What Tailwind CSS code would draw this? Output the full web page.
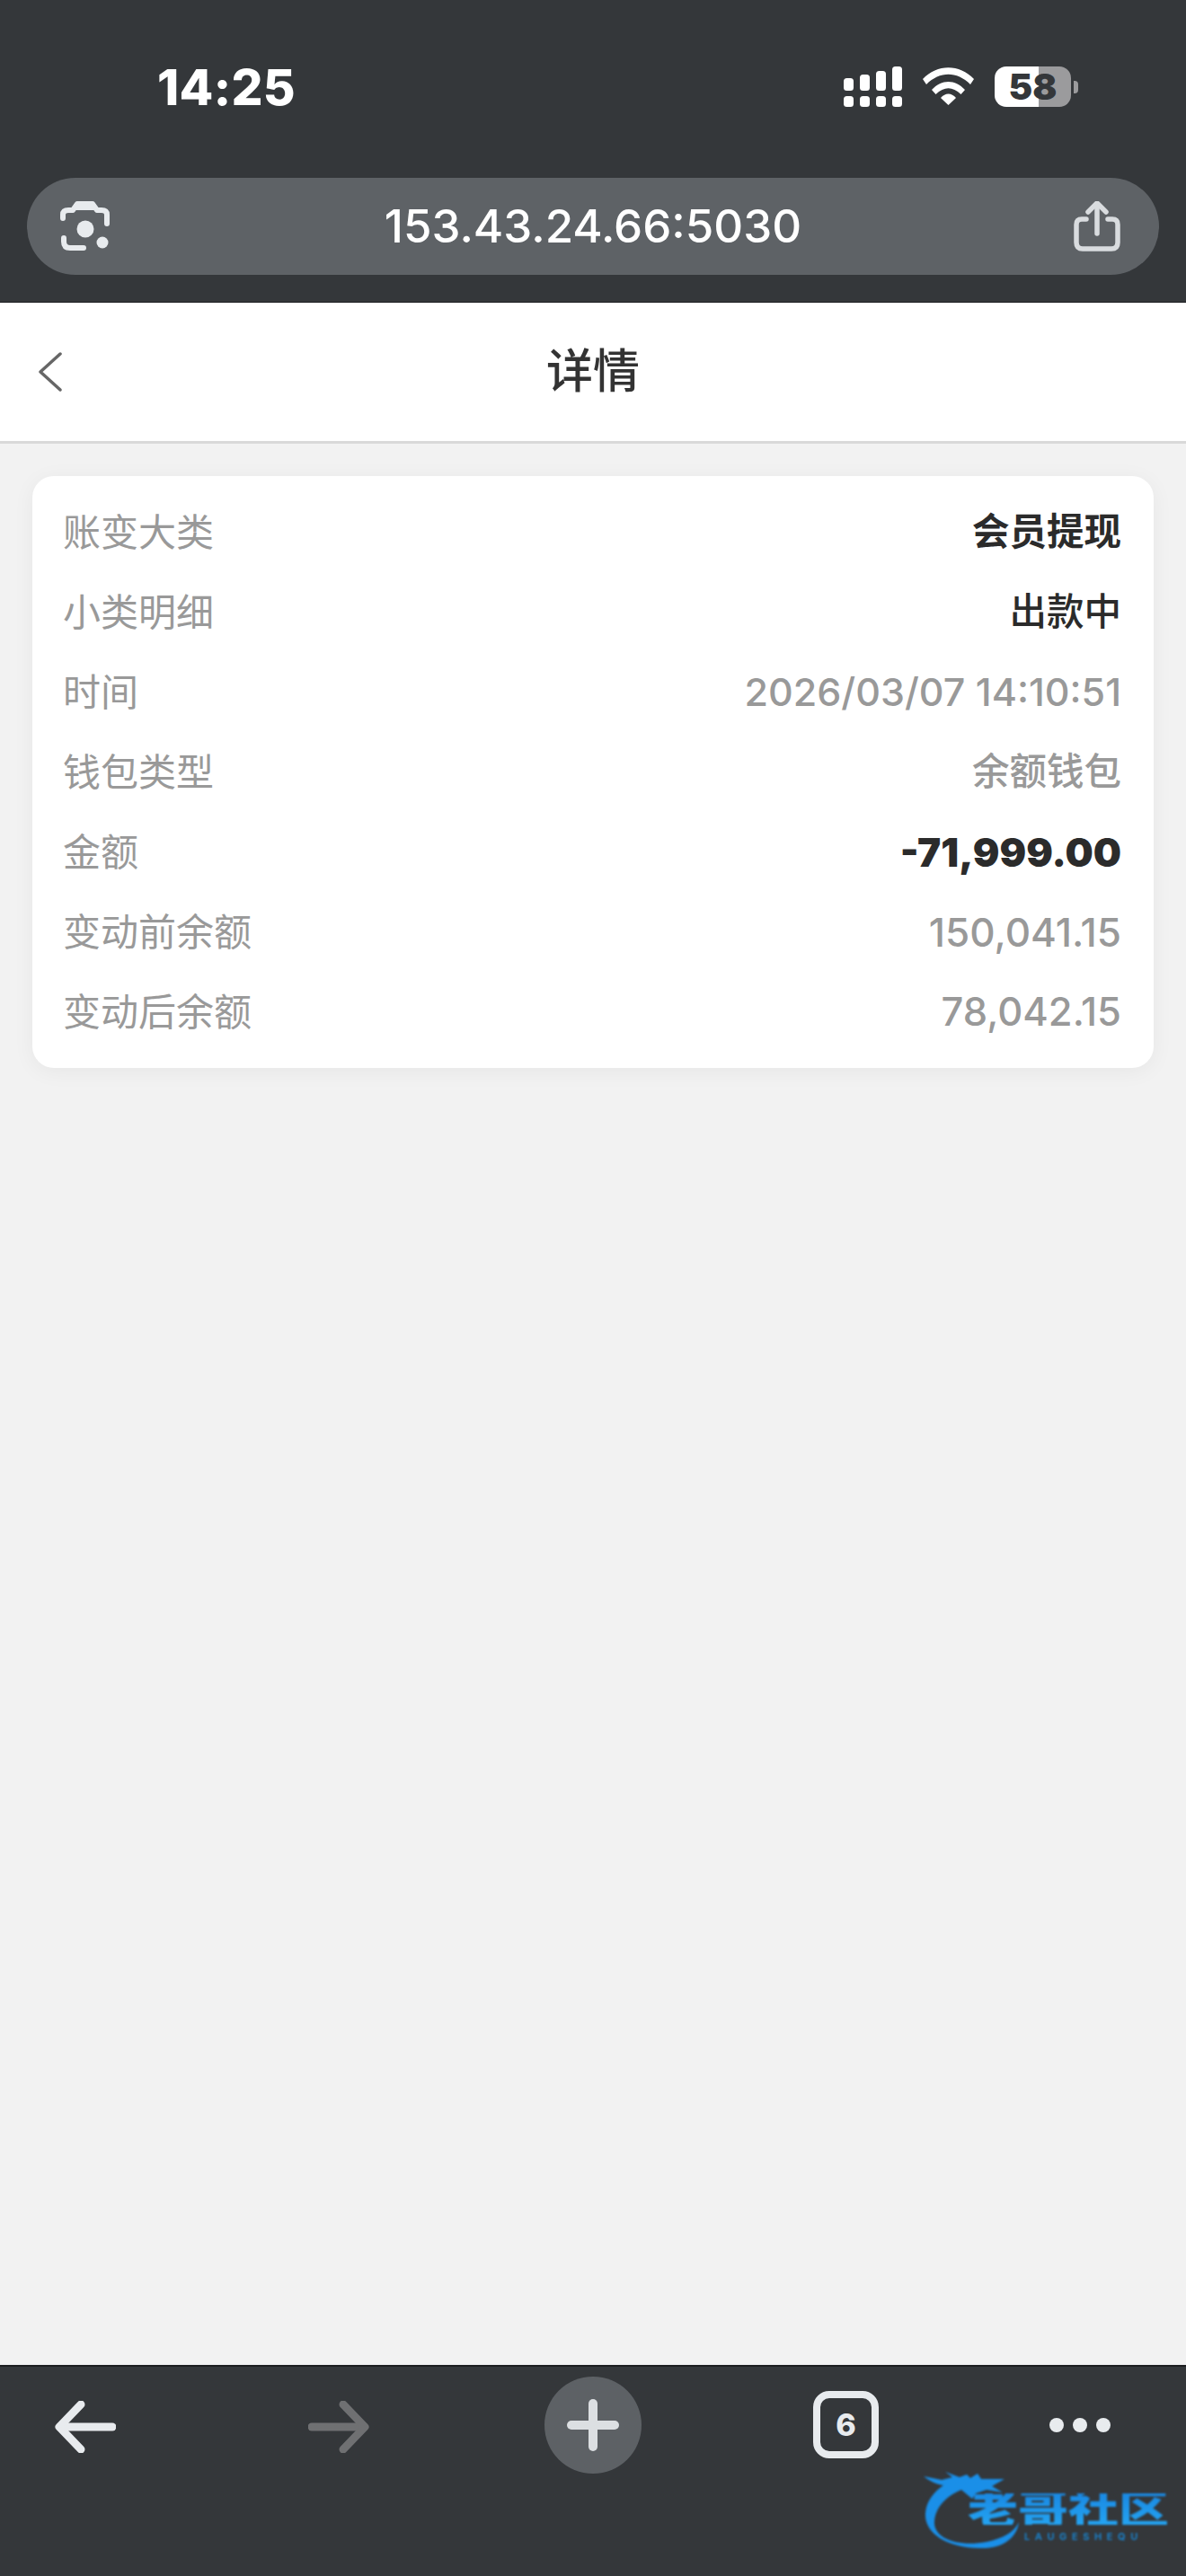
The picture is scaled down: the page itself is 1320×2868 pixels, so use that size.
<!DOCTYPE html>
<html lang="zh-CN">
<head>
<meta charset="utf-8">
<title>详情</title>
<script src="https://cdn.jsdelivr.net/npm/@tailwindcss/browser@4"></script>
</head>
<body class="m-0">
<div class="relative flex flex-col w-[1320px] h-[2868px] overflow-hidden bg-[#f2f2f2] font-['Inter','Noto_Sans_CJK_SC',sans-serif]">

  <header class="h-[337px] shrink-0 bg-[#34373a] border-b border-b-[#1c1e20] flex flex-col">
    <div class="h-[198px] shrink-0 flex items-start justify-between pl-[175px] pr-[120px] pt-[64px]">
      <span class="text-[55px] leading-[66px] font-extrabold text-white tracking-[0.3px]">14:25</span>
      <div class="flex items-start gap-[23px] pt-[10px]">
        <svg width="65" height="45" viewBox="0 0 65 45" fill="#fff">
          <rect x="0" y="13" width="11" height="14" rx="3.5"/><rect x="18" y="9" width="11" height="18" rx="3.5"/><rect x="36" y="5" width="11" height="22" rx="3.5"/><rect x="54" y="0" width="11" height="27" rx="3.5"/>
          <rect x="0" y="33" width="11" height="12" rx="3.5"/><rect x="18" y="33" width="11" height="12" rx="3.5"/><rect x="36" y="33" width="11" height="12" rx="3.5"/><rect x="54" y="33" width="11" height="12" rx="3.5"/>
        </svg>
        <svg width="57" height="42" viewBox="0 0 57 42" fill="#fff" class="mt-[1px]">
          <path d="M0 13 C16 -4 41 -4 57 13 L53 19 C38 4 19 4 4 19 Z"/>
          <path d="M10 25 C21 13 36 13 47 25 L42.500 30 C33 21 24 21 14.500 30 Z"/>
          <path d="M20 34 C25 28 32 28 37 34 L28.500 42 Z"/>
        </svg>
        <div class="flex items-center gap-[3px]">
          <div class="w-[85px] h-[45px] rounded-[13px] bg-[linear-gradient(90deg,#ffffff_49px,#9b9b9d_49px)] flex items-center justify-center">
            <span class="text-[40px] leading-[45px] font-black text-[#34373a]">58</span>
          </div>
          <div class="w-[5px] h-[14px] rounded-r-[4px] bg-[#9b9b9d]"></div>
        </div>
      </div>
    </div>
    <div class="mx-[30px] h-[108px] rounded-full bg-[#5e6266] flex items-center justify-between pl-[37px] pr-[43px]">
      <svg width="58" height="56" viewBox="0 0 58 56" fill="none" stroke="#e8ebee" stroke-width="6" stroke-linecap="round" stroke-linejoin="round">
        <path d="M3 19 V15 Q3 10 9 10 H14 L19 3 H36 L41 10 H46 Q52 10 52 15 V25" fill="none"/>
        <path d="M16 3 H39 L43 10 H12 Z" fill="#e8ebee" stroke="none"/>
        <path d="M4 41 V45 Q4 52 11 52 H26"/>
        <circle cx="28" cy="31" r="9.500" fill="#e8ebee" stroke="none"/>
        <circle cx="47" cy="46" r="6.500" fill="#e8ebee" stroke="none"/>
      </svg>
      <span class="text-[51px] leading-[60px] font-medium text-white">153.43.24.66:5030</span>
      <svg width="52" height="56" viewBox="0 0 52 56" fill="none" stroke="#d9dcdf" stroke-width="5.500" stroke-linecap="round" stroke-linejoin="round">
        <path d="M14 20 H9 Q3 20 3 26 V46 Q3 53 10 53 H42 Q49 53 49 46 V26 Q49 20 43 20 H38"/>
        <path d="M26 36 V4"/>
        <path d="M16 12 L26 2 L36 12"/>
      </svg>
    </div>
  </header>

  <nav class="h-[157px] shrink-0 bg-white border-b-[3px] border-b-[#d9d9d9] relative flex items-center justify-center">
    <svg class="absolute left-[42px] top-[55px]" width="27" height="44" viewBox="0 0 27 44" fill="none" stroke="#666" stroke-width="3.500" stroke-linecap="round" stroke-linejoin="round"><path d="M25 2 L3 22 L25 42"/></svg>
    <h1 class="text-[52px] leading-[60px] font-medium text-[#333]">详情</h1>
  </nav>

  <main class="flex-1 px-[36px] pt-[36px]">
    <section class="bg-white rounded-[24px] pl-[34px] pr-[36px] py-[18px] shadow-[0_4px_24px_rgba(0,0,0,0.05)] text-[42px] text-[#999]">
      <div class="h-[89px] flex items-center justify-between"><span>账变大类</span><span class="text-[41.500px] font-bold text-[#2b2b2b]">会员提现</span></div>
      <div class="h-[89px] flex items-center justify-between"><span>小类明细</span><span class="text-[41.500px] font-medium text-[#2b2b2b]">出款中</span></div>
      <div class="h-[89px] flex items-center justify-between"><span>时间</span><span class="text-[43px] font-medium">2026/03/07 14:10:51</span></div>
      <div class="h-[89px] flex items-center justify-between"><span>钱包类型</span><span class="text-[41.500px] font-medium">余额钱包</span></div>
      <div class="h-[89px] flex items-center justify-between"><span>金额</span><span class="text-[44px] font-black text-[#2b2b2b]">-71,999.00</span></div>
      <div class="h-[89px] flex items-center justify-between"><span>变动前余额</span><span class="text-[44px] font-medium">150,041.15</span></div>
      <div class="h-[89px] flex items-center justify-between"><span>变动后余额</span><span class="text-[43.500px] font-medium">78,042.15</span></div>
    </section>
  </main>

  <footer class="h-[235px] shrink-0 bg-[#34373a] border-t-2 border-t-[#1c1e20] flex items-start pt-[11px] pl-[61px]">
    <svg class="mt-[27px]" width="68" height="58" viewBox="0 0 68 58" fill="none" stroke="#e8ebee" stroke-width="9" stroke-linecap="round" stroke-linejoin="round"><path d="M64 29 H6"/><path d="M29 4 L5 29 L29 54"/></svg>
    <svg class="mt-[27px] ml-[214px]" width="68" height="58" viewBox="0 0 68 58" fill="none" stroke="#6f7072" stroke-width="9" stroke-linecap="round" stroke-linejoin="round"><path d="M4 29 H62"/><path d="M39 4 L63 29 L39 54"/></svg>
    <div class="ml-[195px] w-[108px] h-[108px] rounded-full bg-[#5d6165] flex items-center justify-center">
      <svg width="58" height="58" viewBox="0 0 58 58" fill="none" stroke="#dcdfe2" stroke-width="10" stroke-linecap="round"><path d="M29 5 V53"/><path d="M5 29 H53"/></svg>
    </div>
    <div class="ml-[191px] mt-[16px] w-[73px] h-[75px] rounded-[18px] border-[8px] border-[#e8ebee] flex items-center justify-center text-[34px] leading-none font-extrabold text-[#e8ebee]">6</div>
    <div class="ml-[190px] mt-[46px] flex gap-[10px]">
      <span class="w-[16px] h-[16px] rounded-full bg-[#e8ebee]"></span>
      <span class="w-[16px] h-[16px] rounded-full bg-[#e8ebee]"></span>
      <span class="w-[16px] h-[16px] rounded-full bg-[#e8ebee]"></span>
    </div>
  </footer>

  <div class="absolute left-[1026px] top-[2748px] w-[280px] h-[95px] blur-[0.8px]">
    <svg class="absolute left-0 top-0" width="120" height="95" viewBox="0 0 120 95">
      <path d="M2 9 L22 13 L34 10 L26 4 L42 10 L50 7 L54 11 L62 6 L66 12 L92 12 L78 20 L90 27 L72 24 L60 28 L56 34 L44 24 C24 32 13 48 14 62 C15 78 40 88 72 82 C90 78 102 72 108 60 C106 76 92 90 64 89 C28 89 2 72 4 50 C5 36 14 26 24 19 C16 18 8 14 2 9 Z" fill="#1a8fe8"/>
    </svg>
    <div class="absolute left-[51px] top-[28px] w-[230px] text-[56px] leading-[44px] font-black bg-linear-to-b from-[#1a88e2] to-[#24a4f2] bg-clip-text text-transparent origin-top-left scale-y-[0.8] whitespace-nowrap">老哥社区</div>
    <div class="absolute left-[114px] top-[71px] text-[11px] leading-[10px] font-bold tracking-[5.600px] text-[#1a80c8] whitespace-nowrap">LAUGESHEQU</div>
  </div>
</div>
</body>
</html>
